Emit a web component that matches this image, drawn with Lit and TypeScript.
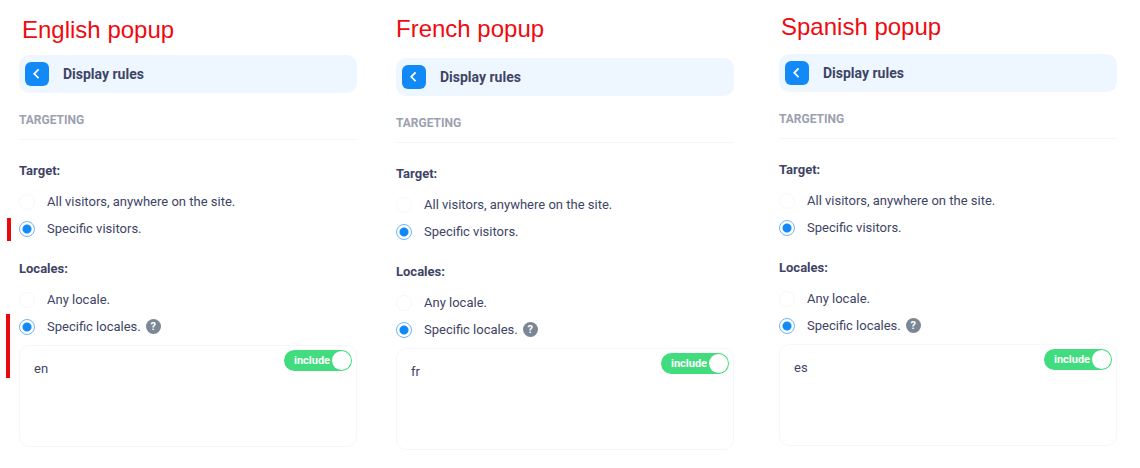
import { LitElement, html, css, nothing } from "lit";
import { customElement, property } from "lit/decorators.js";

const base = css`
  *,
  *::before,
  *::after {
    box-sizing: border-box;
  }
`;

@customElement("rules-panel")
export class RulesPanel extends LitElement {
  @property() locale = "";
  @property() heading = "";
  @property({ type: Boolean }) marked = false;

  static styles = [
    base,
    css`
      :host {
        display: block;
        font: 13px/20px Roboto, sans-serif;
        color: #3e4466;
      }
      .title {
        margin: 0 0 var(--title-gap, 12px);
        padding-left: var(--title-indent, 1px);
        font: 24px/28px "Liberation Sans", Arial, sans-serif;
        color: #ee0b10;
      }
      .bar {
        display: flex;
        align-items: center;
        gap: 14px;
        height: 38px;
        padding: 0 6px;
        border-radius: 10px;
        background: #eef7ff;
      }
      .back {
        display: grid;
        place-items: center;
        width: 24px;
        height: 24px;
        padding: 0;
        border: 0;
        border-radius: 6px;
        background: #118af8;
        cursor: pointer;
      }
      .back svg {
        display: block;
      }
      .name {
        margin: 0;
        font-size: 14px;
        font-weight: 700;
      }
      .section {
        margin: 0;
        padding: 17px 0 9px;
        border-bottom: 1px solid #f5f6f8;
        font-size: 12px;
        font-weight: 700;
        color: #9ba1b0;
        text-transform: uppercase;
      }
      .group {
        margin: 0;
        padding: 0;
        border: 0;
      }
      .legend {
        padding: 21px 0 7px;
        font-weight: 700;
      }
      .group + .group .legend {
        padding-top: 17px;
      }
      .option {
        position: relative;
        display: flex;
        align-items: center;
        height: 27px;
      }
      .option label {
        padding-left: 12px;
      }
      .radio {
        appearance: none;
        width: 16px;
        height: 16px;
        margin: 0;
        border: 1px solid #f8f8fb;
        border-radius: 50%;
        background: #fff;
      }
      .radio:checked {
        border-color: #73b5f5;
        background: radial-gradient(circle, #118af8 4px, #fff 5px);
      }
      .help {
        width: 15px;
        height: 15px;
        margin-left: 5px;
        padding: 0;
        border: 0;
        border-radius: 50%;
        background: #7b8794;
        color: #fff;
        font: 700 11px/15px Roboto, sans-serif;
        text-align: center;
      }
      .mark {
        position: absolute;
        width: 4px;
        background: #e90710;
      }
      .mark-row {
        left: -12px;
        top: 3px;
        height: 23px;
      }
      .mark-block {
        left: -13px;
        top: 1px;
        height: 64px;
      }
      .field {
        position: relative;
        margin-top: 5px;
      }
      .text {
        display: block;
        width: 100%;
        height: 102px;
        padding: 13px 14px;
        border: 1px solid #f7f7fa;
        border-radius: 10px;
        background: #fff;
        color: inherit;
        font: inherit;
        resize: none;
        outline: none;
      }
      .toggle {
        position: absolute;
        top: 5px;
        right: 5px;
        display: flex;
        align-items: center;
        justify-content: space-between;
        width: 68px;
        height: 21px;
        padding: 0 1px 0 10px;
        border-radius: 11px;
        background: #40dc7e;
        color: #fff;
        font-size: 11px;
        font-weight: 700;
        cursor: pointer;
      }
      .knob {
        appearance: none;
        width: 19px;
        height: 19px;
        margin: 0;
        border-radius: 50%;
        background: #fff;
      }
    `,
  ];

  private option(group: string, id: string, label: string, checked: boolean) {
    return html`<input class="radio" type="radio" name=${group} id=${id} .checked=${checked} />
      <label for=${id}>${label}</label>`;
  }

  private mark(kind: string) {
    return this.marked ? html`<span class="mark ${kind}"></span>` : nothing;
  }

  render() {
    return html`
      <h2 class="title">${this.heading}</h2>
      <header class="bar">
        <button class="back" type="button" aria-label="Back">
          <svg width="12" height="12" viewBox="0 0 12 12" fill="none" stroke="#fff" stroke-width="1.7">
            <path d="M7.6 1.4 3.2 5.8 7.6 10.2" />
          </svg>
        </button>
        <h3 class="name">Display rules</h3>
      </header>
      <h4 class="section">Targeting</h4>
      <fieldset class="group">
        <legend class="legend">Target:</legend>
        <div class="option">
          ${this.option("target", "all", "All visitors, anywhere on the site.", false)}
        </div>
        <div class="option">
          ${this.option("target", "specific", "Specific visitors.", true)} ${this.mark("mark-row")}
        </div>
      </fieldset>
      <fieldset class="group">
        <legend class="legend">Locales:</legend>
        <div class="option">${this.option("locales", "any", "Any locale.", false)}</div>
        <div class="option">
          ${this.option("locales", "listed", "Specific locales.", true)}
          <button class="help" type="button" aria-label="Help">?</button>
          ${this.mark("mark-block")}
        </div>
      </fieldset>
      <div class="field">
        <textarea class="text" aria-label="Locale list" .value=${this.locale}></textarea>
        <label class="toggle">include<input class="knob" type="checkbox" checked /></label>
      </div>
    `;
  }
}

@customElement("app-root")
export class AppRoot extends LitElement {
  static styles = [
    base,
    css`
      :host {
        display: block;
        min-height: 100vh;
        background: #fff;
      }
      .panels {
        display: flex;
        align-items: flex-start;
        gap: 39px;
        padding: 0 23px 18px 19px;
      }
      .panel {
        flex: 1;
        min-width: 0;
      }
      .english {
        padding-top: 16px;
        --title-gap: 11px;
        --title-indent: 3px;
      }
      .french {
        padding-top: 15px;
        --title-gap: 15px;
        --title-indent: 0;
      }
      .spanish {
        margin-left: 6px;
        padding-top: 13px;
        --title-gap: 13px;
        --title-indent: 2px;
      }
    `,
  ];

  render() {
    return html`<main class="panels">
      <rules-panel class="panel english" heading="English popup" locale="en" marked></rules-panel>
      <rules-panel class="panel french" heading="French popup" locale="fr"></rules-panel>
      <rules-panel class="panel spanish" heading="Spanish popup" locale="es"></rules-panel>
    </main>`;
  }
}
